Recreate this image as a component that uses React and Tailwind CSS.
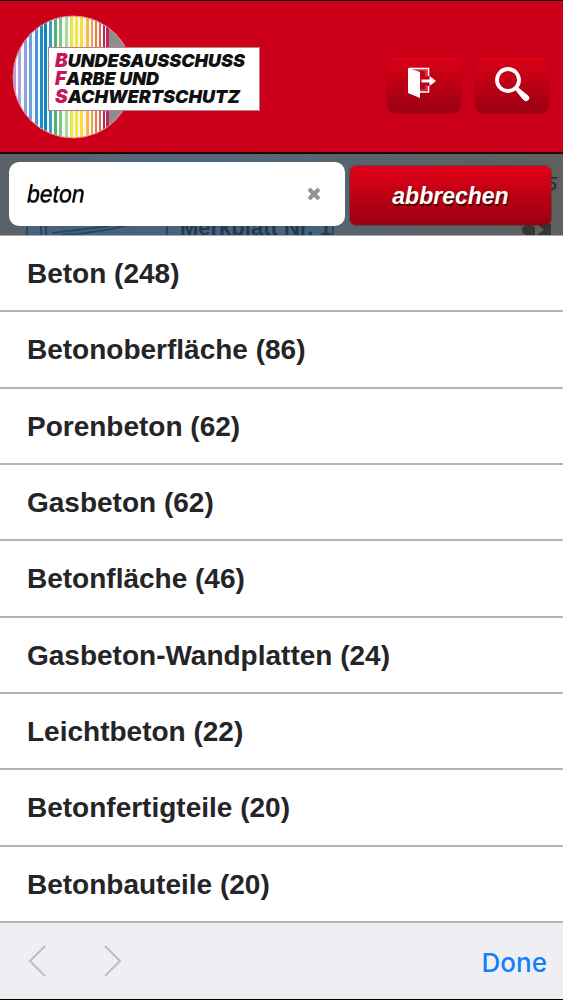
import { useState } from "react";

const suggestions = [
  ["Beton", 248],
  ["Betonoberfläche", 86],
  ["Porenbeton", 62],
  ["Gasbeton", 62],
  ["Betonfläche", 46],
  ["Gasbeton-Wandplatten", 24],
  ["Leichtbeton", 22],
  ["Betonfertigteile", 20],
  ["Betonbauteile", 20],
];

const stripes = [
  [1, "#b9a3d0"], [6, "#a9a4dc"], [12, "#8fa0dc"], [17, "#6f9fdc"], [23, "#4a93d6"],
  [28, "#168fca"], [32, "#1583b4"], [37, "#3c9cc0"], [42, "#55ad76"], [47, "#7fc58a"],
  [53, "#a9d8a0"], [58, "#e5e54a"], [63, "#ffe62e"], [68, "#ffdc35"], [74, "#fbb843"],
];

const narrowStripes = [
  [79, "#f3a14a"], [83, "#ea7a4c"], [87, "#e2674d"], [91, "#b3274b"], [95, "#a8234b"],
];

function LogoDisc() {
  return (
    <svg viewBox="0 0 122 124" className="h-[124px] w-[122px]" aria-hidden="true">
      <defs>
        <clipPath id="disc">
          <ellipse cx="61" cy="62" rx="60" ry="61" />
        </clipPath>
      </defs>
      <g clipPath="url(#disc)">
        <rect width="122" height="124" fill="#f6f8fa" />
        {stripes.map(([x, color]) => (
          <rect key={x} x={x} y="0" width="3" height="124" fill={color} />
        ))}
        {narrowStripes.map(([x, color]) => (
          <rect key={x} x={x} y="0" width="2" height="124" fill={color} />
        ))}
        <rect x="97" width="25" height="124" fill="#8d8d8d" />
        <rect x="94" width="3" height="124" fill="#c2235c" />
      </g>
      <ellipse cx="61" cy="62" rx="60" ry="61" fill="none" stroke="#e48a94" strokeWidth="1" />
    </svg>
  );
}

function LogoLine({ initial, rest }) {
  return (
    <span className="block text-[18px] leading-[18px]">
      <span className="text-[19px] text-[#c9155c]">{initial}</span>
      {rest}
    </span>
  );
}

function Logo() {
  return (
    <a href="#start" className="relative block h-[124px] w-[248px] shrink-0" aria-label="Startseite">
      <LogoDisc />
      <span className="absolute top-8 left-9 block h-16 w-[212px] border border-[#b9828a] bg-white py-1 pl-[6px] font-[Inter] font-black whitespace-nowrap text-[#111] italic">
        <LogoLine initial="B" rest="UNDESAUSSCHUSS" />
        <LogoLine initial="F" rest="ARBE UND" />
        <LogoLine initial="S" rest="ACHWERTSCHUTZ" />
      </span>
    </a>
  );
}

const headerButton =
  "flex h-[56px] w-[74px] items-center justify-center rounded-lg bg-linear-to-b from-[#dc0018] to-[#9c0012] shadow-[0_0_3px_#a00014]";

function Header() {
  return (
    <header className="flex items-start justify-between border-t border-b-2 border-t-black border-b-[#210408] bg-[#cd001c] pt-[14px] pr-[14px] pb-[13px] pl-3">
      <Logo />
      <div className="flex gap-[14px] pt-[42px]">
        <button type="button" aria-label="Abmelden" className={headerButton}>
          <svg viewBox="0 0 30 32" className="mr-1 mb-1 h-8 w-[30px]" aria-hidden="true">
            <path d="M1 1L13 5V31L1 26Z" fill="#fff" />
            <path d="M2 1.5H21.5V9M21.5 19V25H13" fill="none" stroke="#fff" strokeWidth="1.6" />
            <path d="M4 3H19V10M19 18V23H13" fill="none" stroke="#fff" strokeOpacity=".4" />
            <path d="M14.5 12.5H22.5V9L29 14L22.5 19V15.5H14.5Z" fill="#fff" />
          </svg>
        </button>
        <button type="button" aria-label="Suchen" className={headerButton}>
          <svg viewBox="0 0 36 36" className="h-9 w-9" aria-hidden="true">
            <circle cx="14" cy="13" r="11" fill="none" stroke="#fff" strokeWidth="3.8" />
            <path d="M21 22L23 20L34 29Q36 31 34 33Q31 35 29 32Z" fill="#fff" stroke="#fff" strokeLinejoin="round" />
          </svg>
        </button>
      </div>
    </header>
  );
}

function CoveredPage() {
  return (
    <div className="absolute inset-0 overflow-hidden bg-linear-to-r from-[#5b6169] via-[#50687c] via-30% to-[#5e605d]" aria-hidden="true">
      <div className="absolute top-[70px] left-[26px] h-10 w-[308px] border-x-2 border-t border-[#294760] bg-[#47647c]" />
      <svg viewBox="0 0 130 12" className="absolute top-[70px] left-[38px] h-3 w-[130px]">
        <path d="M3 0V12M8 0V12M14 9L40 6L72 2M24 11Q60 9 90 1M129 0V12" fill="none" stroke="#294760" strokeWidth="2" />
      </svg>
      <span className="absolute top-[62px] left-[180px] text-[22px] leading-6 font-bold whitespace-nowrap text-[#203a50]">
        Merkblatt Nr. 1
      </span>
      <span className="absolute top-[18px] right-[6px] text-[19px] leading-6 text-[#292b2a] italic">5</span>
      <svg viewBox="0 0 30 14" className="absolute right-[12px] bottom-0 h-[14px] w-[30px]">
        <path d="M1 7Q7 1 14 6V14H5Q1 13 1 7ZM16 3H30V14H16L23 9Z" fill="#333635" />
      </svg>
    </div>
  );
}

function SearchBar() {
  const [query, setQuery] = useState("beton");
  return (
    <div className="relative">
      <CoveredPage />
      <form className="relative flex items-start gap-[5px] pt-2 pr-3 pb-[9px] pl-[9px]" onSubmit={(e) => e.preventDefault()}>
        <div className="flex h-16 min-w-0 flex-1 items-center rounded-[10px] bg-white pr-5 pl-[18px]">
          <input
            type="text"
            aria-label="Suchbegriff"
            value={query}
            onChange={(e) => setQuery(e.target.value)}
            className="min-w-0 flex-1 bg-transparent text-[23px] leading-8 text-black italic outline-none [text-shadow:0_1px_0_#555]"
          />
          <button type="button" aria-label="Eingabe löschen" onClick={() => setQuery("")} className="flex size-[22px] items-center justify-center">
            <svg viewBox="0 0 14 14" className="size-[14px]" aria-hidden="true">
              <path d="M2 2L12 12M12 2L2 12" stroke="#929292" strokeWidth="4" />
            </svg>
          </button>
        </div>
        <button
          type="button"
          className="mt-1 h-[59px] w-[201px] shrink-0 rounded-md bg-linear-to-b from-[#e30019] to-[#99000f] text-[23px] leading-8 font-bold text-white italic shadow-[0_0_2px_#50000a] [text-shadow:1px_2px_1px_#400]"
        >
          abbrechen
        </button>
      </form>
    </div>
  );
}

function SuggestionList() {
  return (
    <ul className="grid flex-1 auto-rows-fr border-t border-[#aaa]">
      {suggestions.map(([term, count]) => (
        <li key={term} className="flex border-b-2 border-[#b5b5b5]">
          <a href="#treffer" className="flex min-h-[72px] flex-1 items-center px-[27px] pt-[2px] text-[28px] leading-9 font-bold text-[#252427]">
            {term} ({count})
          </a>
        </li>
      ))}
    </ul>
  );
}

function KeyboardBar() {
  return (
    <footer className="flex items-center justify-between border-b border-black bg-[#efeff3] py-[18px] pr-4 pl-7">
      <div className="flex gap-[58px]">
        <button type="button" aria-label="Vorheriges Feld">
          <svg viewBox="0 0 18 32" className="h-8 w-[18px]" aria-hidden="true">
            <path d="M17 1L2 16L17 31" fill="none" stroke="#bebec3" strokeWidth="2" />
          </svg>
        </button>
        <button type="button" aria-label="Nächstes Feld">
          <svg viewBox="0 0 18 32" className="h-8 w-[18px]" aria-hidden="true">
            <path d="M1 1L16 16L1 31" fill="none" stroke="#bebec3" strokeWidth="2" />
          </svg>
        </button>
      </div>
      <button type="button" className="pt-1 font-[Inter] text-[26px] leading-9 font-medium text-[#147efb]">
        Done
      </button>
    </footer>
  );
}

export default function App() {
  return (
    <div className="flex min-h-screen flex-col bg-white font-['Liberation_Sans',Arial,sans-serif]">
      <Header />
      <SearchBar />
      <SuggestionList />
      <KeyboardBar />
    </div>
  );
}
